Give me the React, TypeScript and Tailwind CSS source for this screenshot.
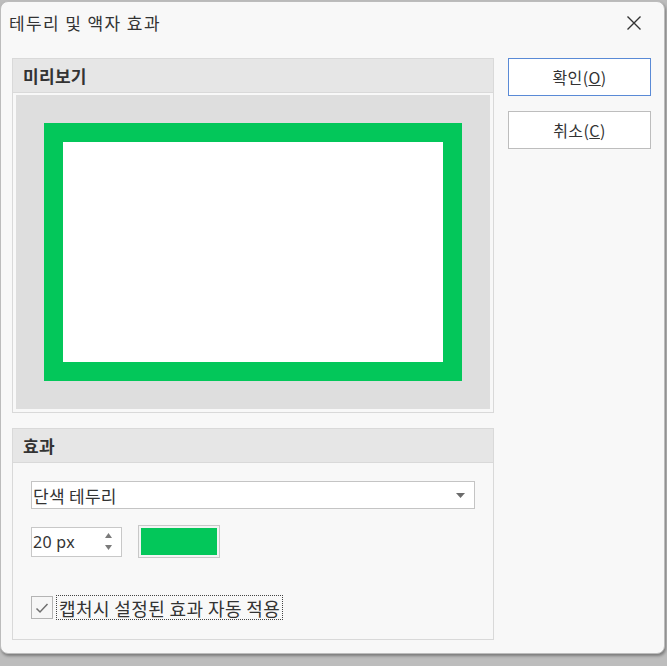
import React from "react";

const font = { fontFamily: '"Noto Sans CJK KR", "Noto Sans", sans-serif' };

function CloseIcon() {
  return (
    <svg width="16" height="16" viewBox="0 0 16 16" className="block">
      <path d="M1.5 1.5 L14.5 14.5 M14.5 1.5 L1.5 14.5" stroke="#333" strokeWidth="1.4" fill="none" />
    </svg>
  );
}

export default function App() {
  return (
    <div className="w-[667px] h-[666px] bg-[#bdbdbd] overflow-hidden text-[#333]" style={font}>
      <div className="w-[665px] h-[653px] mt-[1px] bg-[#f8f8f8] rounded-[8px] border border-[#bcbcbc] shadow-[1px_2px_3px_rgba(0,0,0,0.35)] flex flex-col">
        {/* title bar */}
        <div className="h-[41px] flex items-center justify-between pl-[8px] pr-[22px]">
          <span className="text-[17px] tracking-[1.4px] leading-none">테두리 및 액자 효과</span>
          <CloseIcon />
        </div>
        {/* body */}
        <div className="flex pt-[15px] pl-[11px] gap-[14px]">
          {/* left column */}
          <div className="w-[482px] flex flex-col gap-[15px]">
            {/* preview group */}
            <div className="border border-[#d9d9d9] flex flex-col">
              <div className="h-[34px] bg-[#e6e6e6] border-b border-[#d9d9d9] flex items-center pl-[10px]">
                <span className="text-[17px] font-bold leading-none tracking-[0.3px]">미리보기</span>
              </div>
              <div className="p-[3px] pt-[2px]">
                <div className="h-[314px] bg-[#dedede] flex items-center justify-center">
                  <div className="w-[418px] h-[258px] border-[19px] border-[#03c75a] bg-white" />
                </div>
              </div>
            </div>
            {/* effect group */}
            <div className="h-[212px] border border-[#d9d9d9] flex flex-col">
              <div className="h-[34px] bg-[#e6e6e6] border-b border-[#d9d9d9] flex items-center pl-[10px]">
                <span className="text-[17px] font-bold leading-none tracking-[0.3px]">효과</span>
              </div>
              <div className="flex flex-col px-[18px] pt-[18px]">
                {/* dropdown */}
                <div className="h-[28px] bg-white border border-[#c4c4c4] flex items-center justify-between pl-[1px] pr-[9px]">
                  <span className="text-[17px] leading-none tracking-[0.3px]">단색 테두리</span>
                  <svg width="9" height="5" viewBox="0 0 9 5" className="block">
                    <path d="M0 0 L9 0 L4.5 5 Z" fill="#6b6b6b" />
                  </svg>
                </div>
                {/* spinner + swatch */}
                <div className="flex items-center gap-[16px] mt-[16px]">
                  <div className="w-[91px] h-[30px] bg-white border border-[#c8c8c8] flex items-center justify-between pl-[1px] pr-[9px]">
                    <span className="text-[16px] leading-none tracking-[0.3px]" style={{ fontFamily: '"Noto Sans", sans-serif' }}>20 px</span>
                    <div className="flex flex-col gap-[7px]">
                      <svg width="7" height="5" viewBox="0 0 7 5" className="block">
                        <path d="M0 5 L7 5 L3.5 0 Z" fill="#7a7a7a" />
                      </svg>
                      <svg width="7" height="5" viewBox="0 0 7 5" className="block">
                        <path d="M0 0 L7 0 L3.5 5 Z" fill="#7a7a7a" />
                      </svg>
                    </div>
                  </div>
                  <div className="w-[82px] h-[33px] border border-[#c8c8c8] bg-[#f4f4f4] p-[2px]">
                    <div className="w-full h-full bg-[#03c75a]" />
                  </div>
                </div>
                {/* checkbox */}
                <div className="flex items-center mt-[37px] gap-[3px]">
                  <div className="w-[22px] h-[23px] border border-[#b4b4b4] bg-[#f6f6f6] flex items-center justify-center">
                    <svg width="14" height="12" viewBox="0 0 14 12" className="block">
                      <path d="M1.5 6.5 L5 10 L12.5 2" stroke="#6f6f6f" strokeWidth="1.5" fill="none" />
                    </svg>
                  </div>
                  <div className="h-[25px] border border-dotted border-[#444] flex items-center px-[2px]">
                    <span className="text-[18px] leading-none tracking-[0.4px]">캡처시 설정된 효과 자동 적용</span>
                  </div>
                </div>
              </div>
            </div>
          </div>
          {/* right column */}
          <div className="w-[143px] flex flex-col gap-[15px]">
            <div className="h-[38px] bg-white border border-[#5a8ad6] flex items-center justify-center">
              <span className="text-[16px] leading-none tracking-[0.4px]">확인(<span className="underline">O</span>)</span>
            </div>
            <div className="h-[38px] bg-white border border-[#bdbdbd] flex items-center justify-center">
              <span className="text-[16px] leading-none tracking-[0.4px]">취소(<span className="underline">C</span>)</span>
            </div>
          </div>
        </div>
      </div>
    </div>
  );
}
